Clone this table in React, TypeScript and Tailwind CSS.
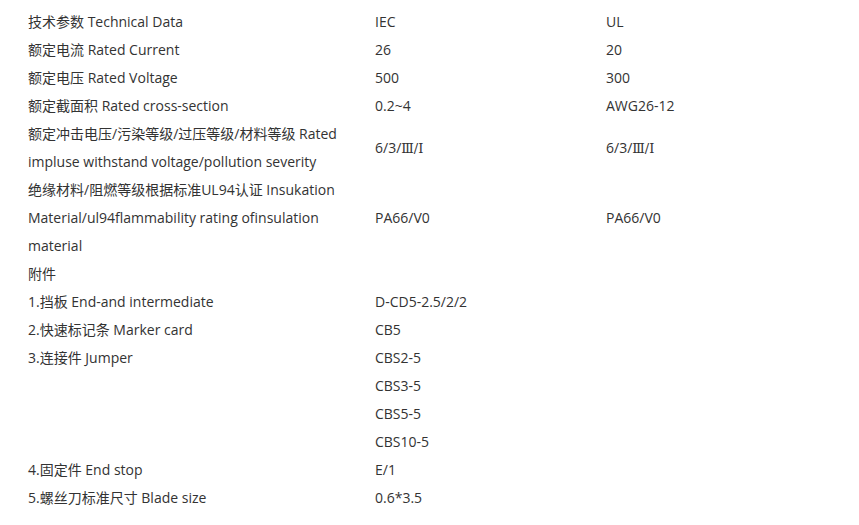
const Roman = () => (
  <>
    6/3/<span className="[font-family:'DejaVu_Serif',serif] text-[13px]">Ⅲ/Ⅰ</span>
  </>
);

const rows: { a: React.ReactNode; b?: React.ReactNode; c?: React.ReactNode }[] = [
  { a: "技术参数 Technical Data", b: "IEC", c: "UL" },
  { a: "额定电流 Rated Current", b: "26", c: "20" },
  { a: "额定电压 Rated Voltage", b: "500", c: "300" },
  { a: "额定截面积 Rated cross-section", b: "0.2~4", c: "AWG26-12" },
  {
    a: (
      <>
        额定冲击电压/污染等级/过压等级/材料等级 Rated
        <br />
        impluse withstand voltage/pollution severity
      </>
    ),
    b: <Roman />,
    c: <Roman />,
  },
  {
    a: (
      <>
        绝缘材料/阻燃等级根据标准UL94认证 Insukation
        <br />
        Material/ul94flammability rating ofinsulation
        <br />
        material
      </>
    ),
    b: "PA66/V0",
    c: "PA66/V0",
  },
  { a: "附件" },
  { a: "1.挡板 End-and intermediate", b: "D-CD5-2.5/2/2" },
  { a: "2.快速标记条 Marker card", b: "CB5" },
  { a: "3.连接件 Jumper", b: "CBS2-5" },
  { a: "", b: "CBS3-5" },
  { a: "", b: "CBS5-5" },
  { a: "", b: "CBS10-5" },
  { a: "4.固定件 End stop", b: "E/1" },
  { a: "5.螺丝刀标准尺寸 Blade size", b: "0.6*3.5" },
];

export default function App() {
  return (
    <div className="w-[859px] h-[525px] bg-white overflow-hidden pt-[8px] pl-[28px] text-[14px] leading-[28px] text-[#333] [font-family:'Open_Sans','Noto_Sans_CJK_SC',sans-serif]">
      {rows.map((r, i) => (
        <div key={i} className="grid grid-cols-[347px_231px_1fr] items-center">
          <div className="whitespace-nowrap min-h-[28px]">{r.a}</div>
          <div className="whitespace-nowrap">{r.b}</div>
          <div className="whitespace-nowrap">{r.c}</div>
        </div>
      ))}
    </div>
  );
}
